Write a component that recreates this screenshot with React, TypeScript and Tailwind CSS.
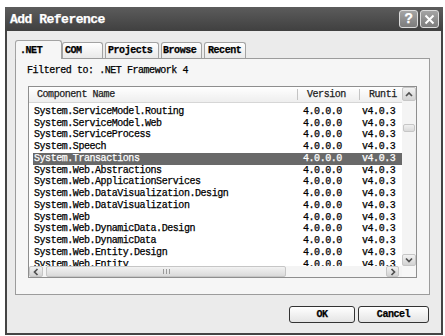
import React from "react";

const rows = [
  "System.ServiceModel.Routing",
  "System.ServiceModel.Web",
  "System.ServiceProcess",
  "System.Speech",
  "System.Transactions",
  "System.Web.Abstractions",
  "System.Web.ApplicationServices",
  "System.Web.DataVisualization.Design",
  "System.Web.DataVisualization",
  "System.Web",
  "System.Web.DynamicData.Design",
  "System.Web.DynamicData",
  "System.Web.Entity.Design",
  "System.Web.Entity",
];

type Dir = "up" | "down" | "left" | "right";

function Chevron({ dir }: { dir: Dir }) {
  const pts = {
    up: "2,7 5,4 8,7",
    down: "2,3.5 5,6.5 8,3.5",
    left: "6.5,2 3.5,5 6.5,8",
    right: "3.5,2 6.5,5 3.5,8",
  }[dir];
  return (
    <svg width="10" height="10" viewBox="0 0 10 10">
      <polyline points={pts} fill="none" stroke="#505050" strokeWidth="1.7" />
    </svg>
  );
}

function ScrollBtn({ dir, className }: { dir: Dir; className: string }) {
  return (
    <div
      className={`flex shrink-0 items-center justify-center rounded-[2px] border border-[#c6c6c6] bg-linear-to-b from-[#f2f2f2] to-[#d2d2d2] ${className}`}
    >
      <Chevron dir={dir} />
    </div>
  );
}

function Tab({ label, className }: { label: string; className: string }) {
  return (
    <div
      className={`flex h-[16px] items-center rounded-t-[3px] border border-b-0 border-[#a3a3a3] bg-linear-to-b from-white to-[#e9e9e9] font-bold ${className}`}
    >
      {label}
    </div>
  );
}

export default function App() {
  return (
    <div className="h-[336px] w-[445px] overflow-hidden bg-white pl-[5px] pt-[7px] font-['Liberation_Mono',monospace] text-[10px] tracking-[-0.45px] text-black [-webkit-text-stroke:0.25px]">
      <div className="flex h-[328px] w-[438px] flex-col bg-[#444444]">
        {/* title bar */}
        <div className="flex h-[24px] shrink-0 items-center justify-between bg-linear-to-b from-[#5c5c5c] to-[#404040] pl-[5px] pr-[4px]">
          <span className="text-[13px] font-bold leading-none tracking-[-0.5px] text-white">
            Add Reference
          </span>
          <div className="flex gap-[2px]">
            <div className="flex h-[18px] w-[19px] items-center justify-center rounded-[3px] border border-[#dcdcdc] bg-linear-to-b from-[#a4a4a4] to-[#7c7c7c] text-[14px] font-bold leading-none text-white">
              ?
            </div>
            <div className="flex h-[18px] w-[19px] items-center justify-center rounded-[3px] border border-[#dcdcdc] bg-linear-to-b from-[#a4a4a4] to-[#7c7c7c]">
              <svg width="11" height="11" viewBox="0 0 11 11">
                <path d="M1.5 1.5 L9.5 9.5 M9.5 1.5 L1.5 9.5" stroke="white" strokeWidth="2" />
              </svg>
            </div>
          </div>
        </div>

        {/* body */}
        <div className="mx-[2px] mb-[2px] flex flex-1 flex-col bg-[#ebebeb] pl-[8px] pt-[9px]">
          {/* tabs */}
          <div className="relative z-10 flex h-[18px] items-end">
            <div className="-mb-px flex h-[19px] w-[47px] items-center rounded-t-[3px] border border-b-0 border-[#a3a3a3] bg-[#f6f6f6] pl-[4px] font-bold">
              .NET
            </div>
            <Tab label="COM" className="w-[41px] pl-[2px]" />
            <Tab label="Projects" className="ml-[2px] w-[54px] pl-[2px]" />
            <Tab label="Browse" className="ml-[2px] w-[41px] pl-[1px]" />
            <Tab label="Recent" className="ml-[2px] w-[42px] pl-[3px]" />
          </div>

          {/* tab panel */}
          <div className="flex h-[237px] w-[415px] flex-col border border-[#9c9c9c] bg-[#f6f6f6] pl-[11px] pt-[6px]">
            <div className="leading-[12px]">Filtered to: .NET Framework 4</div>

            <div className="ml-[1px] mt-[9px] grid h-[192px] w-[389px] grid-cols-[1fr_14px] grid-rows-[1fr_11px] border border-[#8e8e8e] bg-white">
              {/* list */}
              <div className="flex min-w-0 flex-col overflow-hidden">
                <div className="flex h-[16px] shrink-0 items-center border-b border-[#d6d6d6] bg-linear-to-b from-white to-[#eeeeee] text-[#222]">
                  <div className="flex w-[269px] items-center justify-between pl-[8px]">
                    <span>Component Name</span>
                    <span className="h-[11px] w-px bg-[#c4c4c4]" />
                  </div>
                  <div className="flex w-[62px] items-center justify-between pl-[9px]">
                    <span>Version</span>
                    <span className="h-[11px] w-px bg-[#c4c4c4]" />
                  </div>
                  <div className="whitespace-nowrap pl-[9px]">Runti</div>
                </div>
                <div className="flex flex-col pt-[3px]">
                  {rows.map((name, i) => (
                    <div
                      key={name}
                      className={`ml-[4px] grid h-[11.75px] shrink-0 grid-cols-[265px_62px_1fr] items-center whitespace-nowrap leading-none ${
                        i === 4 ? "bg-[#696969] text-white" : ""
                      }`}
                    >
                      <span className="pl-[1px]">{name}</span>
                      <span className="pl-[5px]">4.0.0.0</span>
                      <span className="pl-[2px]">v4.0.3</span>
                    </div>
                  ))}
                </div>
              </div>

              {/* vertical scrollbar */}
              <div className="flex flex-col bg-[#f4f4f4]">
                <ScrollBtn dir="up" className="h-[14px] w-full" />
                <div className="mx-px mt-[23px] h-[8px] rounded-[2px] border border-[#c6c6c6] bg-linear-to-b from-[#f0f0f0] to-[#dadada]" />
                <div className="flex-1" />
                <ScrollBtn dir="down" className="h-[12px] w-full" />
              </div>

              {/* horizontal scrollbar */}
              <div className="flex items-stretch bg-[#f4f4f4]">
                <ScrollBtn dir="left" className="w-[14px]" />
                <div className="ml-[3px] flex w-[240px] items-center justify-center gap-[2px] rounded-[2px] border border-[#c6c6c6] bg-linear-to-b from-[#f2f2f2] to-[#dadada]">
                  <span className="h-[5px] w-px bg-[#9a9a9a]" />
                  <span className="h-[5px] w-px bg-[#9a9a9a]" />
                  <span className="h-[5px] w-px bg-[#9a9a9a]" />
                </div>
                <div className="flex-1" />
                <ScrollBtn dir="right" className="mr-[3px] w-[13px]" />
              </div>
              <div className="bg-[#f7f7f7]" />
            </div>
          </div>

          {/* buttons */}
          <div className="mt-[11px] flex justify-end gap-[3px] pr-[12px]">
            <div className="flex h-[17px] w-[66px] items-center justify-center rounded-[3px] border border-[#333] bg-linear-to-b from-white to-[#e4e4e4] font-bold">
              OK
            </div>
            <div className="flex h-[17px] w-[71px] items-center justify-center rounded-[3px] border border-[#333] bg-linear-to-b from-white to-[#e4e4e4] font-bold">
              Cancel
            </div>
          </div>
        </div>
      </div>
    </div>
  );
}
